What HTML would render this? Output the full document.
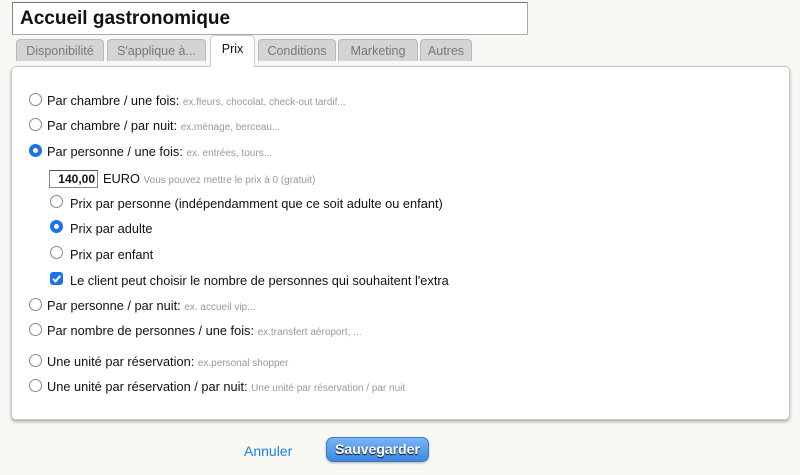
<!DOCTYPE html>
<html><head><meta charset="utf-8"><style>
body{margin:0;width:800px;height:475px;background:#f9f8f4;font-family:"Liberation Sans",Arial,sans-serif;position:relative;overflow:hidden;color:#111}
.abs{position:absolute}
.title{left:12px;top:2px;border:1px solid #aaa;border-top-color:#777;border-left-color:#888;background:#fff;font-size:19px;font-weight:bold;line-height:31px;padding-left:7px;box-sizing:border-box;width:516px;height:33px}
.tab{top:39px;height:22px;background:#d4d4d4;border:1px solid #b8b8b8;border-bottom:none;border-radius:4px 4px 0 0;color:#777;font-size:12.5px;line-height:22px;text-align:center;box-sizing:border-box}
.tab.on{top:35px;height:32px;background:#fff;color:#111;line-height:26px;z-index:2;border-color:#ccc}
.panel{left:11px;top:66px;width:779px;height:354px;background:#fff;border:1px solid #c8c8c8;border-radius:5px;box-shadow:0 2px 3px rgba(0,0,0,.3);box-sizing:border-box}
.row{font-size:12.8px;white-space:nowrap;line-height:16px}
.row small{font-size:10px;color:#999}
.r{display:inline-block;width:13px;height:13px;border:1px solid #888;border-radius:50%;background:#fff;position:absolute;box-sizing:border-box}
.r.on{border:4px solid #1a73e8;background:#fff}
.cb{position:absolute;width:13px;height:13px;background:#1a73e8;border-radius:3px}
</style></head><body>
<div class="abs title">Accueil gastronomique</div>
<div class="abs tab" style="left:16px;width:88px">Disponibilité</div>
<div class="abs tab" style="left:107px;width:99px">S'applique à...</div>
<div class="abs tab on" style="left:210px;width:45px">Prix</div>
<div class="abs tab" style="left:258px;width:78px">Conditions</div>
<div class="abs tab" style="left:338px;width:80px">Marketing</div>
<div class="abs tab" style="left:420px;width:52px">Autres</div>
<div class="abs panel"></div>

<span class="r" style="left:29px;top:93px"></span><div class="abs row" style="left:47px;top:93px">Par chambre / une fois: <small>ex.fleurs, chocolat, check-out tardif...</small></div>
<span class="r" style="left:29px;top:118px"></span><div class="abs row" style="left:47px;top:118px">Par chambre / par nuit: <small>ex.ménage, berceau...</small></div>
<span class="r on" style="left:29px;top:144px"></span><div class="abs row" style="left:47px;top:144px">Par personne / une fois: <small>ex. entrées, tours...</small></div>
<div class="abs" style="left:49px;top:170px;width:49px;height:18px;border:1px solid #888;border-top-color:#555;box-sizing:border-box;font-size:12px;font-weight:bold;text-align:right;padding-right:2px;line-height:16px;background:#fff">140,00</div>
<div class="abs row" style="left:103px;top:171px">EURO <small>Vous pouvez mettre le prix à 0 (gratuit)</small></div>
<span class="r" style="left:50px;top:195px"></span><div class="abs row" style="left:70px;top:196px">Prix par personne (indépendamment que ce soit adulte ou enfant)</div>
<span class="r on" style="left:50px;top:220px"></span><div class="abs row" style="left:70px;top:221px">Prix par adulte</div>
<span class="r" style="left:50px;top:246px"></span><div class="abs row" style="left:70px;top:247px">Prix par enfant</div>
<span class="cb" style="left:50px;top:272px"><svg width="13" height="13" viewBox="0 0 13 13"><path d="M3 6.8l2.5 2.5L10.2 3.8" stroke="#fff" stroke-width="2" fill="none"/></svg></span><div class="abs row" style="left:70px;top:273px">Le client peut choisir le nombre de personnes qui souhaitent l'extra</div>
<span class="r" style="left:29px;top:298px"></span><div class="abs row" style="left:47px;top:298px">Par personne / par nuit: <small>ex. accueil vip...</small></div>
<span class="r" style="left:29px;top:323px"></span><div class="abs row" style="left:47px;top:323px">Par nombre de personnes / une fois: <small>ex.transfert aéroport, ...</small></div>
<span class="r" style="left:29px;top:354px"></span><div class="abs row" style="left:47px;top:354px">Une unité par réservation: <small>ex.personal shopper</small></div>
<span class="r" style="left:29px;top:379px"></span><div class="abs row" style="left:47px;top:379px">Une unité par réservation / par nuit: <small>Une unité par réservation / par nuit</small></div>

<div class="abs" style="left:244px;top:443px;font-size:14px;color:#1a7ee8">Annuler</div>
<div class="abs" style="left:326px;top:437px;width:103px;height:25px;border-radius:7px;background:linear-gradient(#7ab4f5,#3c87e0);border:1px solid #3a7bd0;box-sizing:border-box;box-shadow:0 1px 2px rgba(0,0,0,.3);color:#fff;font-weight:bold;font-size:14px;text-align:center;line-height:23px;text-shadow:0 1px 1px #000">Sauvegarder</div>
</body></html>
